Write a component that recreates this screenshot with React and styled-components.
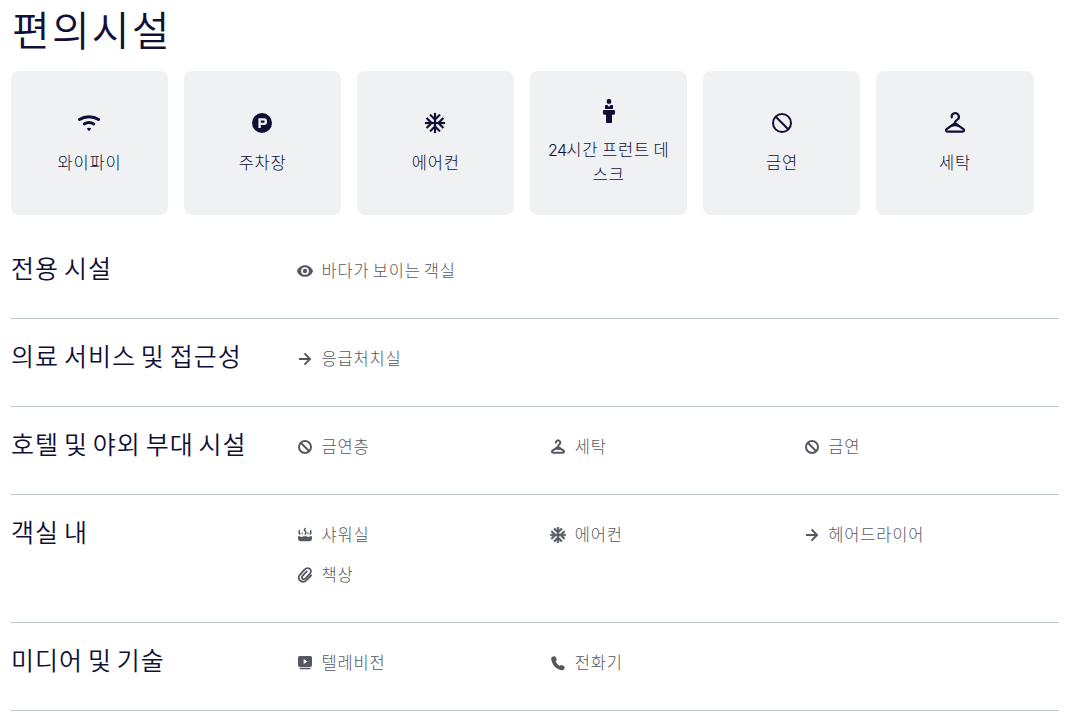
import React from 'react';
import styled, { createGlobalStyle } from 'styled-components';

const ink = '#100f36';
const muted = '#545961';

const GlobalStyle = createGlobalStyle`
  * { box-sizing: border-box; }
  body {
    margin: 0;
    background: #fff;
    color: ${ink};
    font-family: "Noto Sans CJK KR", sans-serif;
    font-weight: 300;
    overflow: hidden;
  }
`;

const Page = styled.main`
  padding: 0 10px 0 11px;
`;

const Title = styled.h1`
  margin: 0;
  height: 71px;
  padding: 0 0 0 1px;
  font-size: 41px;
  font-weight: 350;
  line-height: 56px;
  letter-spacing: 2.2px;
`;

const Highlights = styled.ul`
  display: grid;
  grid-template-columns: repeat(6, 1fr);
  gap: 16px;
  width: 1022.55px;
  margin: 0 0 16px;
  padding: 0;
  list-style: none;
`;

const Card = styled.li`
  display: flex;
  flex-direction: column;
  align-items: center;
  justify-content: center;
  gap: 15px;
  height: 144px;
  padding: 0 16px 1px;
  border-radius: 8px;
  background: #eff1f3;

  svg { margin-right: 0.6px; }
`;

const CardLabel = styled.span`
  margin-top: -0.5px;
  font-size: 16.5px;
  font-weight: 300;
  line-height: 24px;
  letter-spacing: 0.82px;
  word-spacing: -1.8px;
  text-align: center;
`;

const Digits = styled.span`
  font-family: Inter, sans-serif;
  font-size: 16px;
  font-weight: 300;
  letter-spacing: -0.7px;
`;

const Section = styled.section`
  display: grid;
  grid-template-columns: 286px 1fr;
  padding: 27px 0 36px;
  border-bottom: 1px solid #bec5c9;
`;

const SectionTitle = styled.h2`
  height: 32px;
  margin: -7px 0 -1px;
  font-size: 25px;
  font-weight: 350;
  line-height: 32px;
  letter-spacing: 1px;
  word-spacing: -3.1px;
  white-space: nowrap;
`;

const Items = styled.ul`
  display: grid;
  grid-template-columns: repeat(3, 253.4px);
  row-gap: 16px;
  margin: 0;
  padding: 0;
  list-style: none;
`;

const Item = styled.li`
  display: flex;
  align-items: flex-start;
  gap: 8.4px;
  height: 24px;
  color: ${muted};
  font-size: 16.5px;
  line-height: 24px;
  letter-spacing: 0.82px;
  word-spacing: -2.2px;
  white-space: nowrap;

  svg { margin-top: 5px; }
`;

const Glyph = styled.svg`
  display: block;
  flex: none;
  width: ${(p) => p.$size}px;
  height: ${(p) => p.$size}px;
  fill: currentColor;
`;

const stroke = (width) => ({
  fill: 'none',
  stroke: 'currentColor',
  strokeWidth: width,
  strokeLinecap: 'round',
  strokeLinejoin: 'round',
});

const snow =
  'M22 11h-4.17l3.24-3.24-1.41-1.42L15 11h-2V9l4.66-4.66-1.42-1.41L13 6.17V2h-2v4.17L7.76 2.93 6.34 4.34 11 9v2H9L4.34 6.34 2.93 7.76 6.17 11H2v2h4.17l-3.24 3.24 1.41 1.42L9 13h2v2l-4.66 4.66 1.42 1.41L11 17.83V22h2v-4.17l3.24 3.24 1.42-1.41L13 15v-2h2l4.66 4.66 1.41-1.42L17.83 13H22v-2z';

const drawings = {
  wifi: () => (
    <>
      <path {...stroke(3)} d="M2.4 8.4C8 4.7 16 4.7 21.6 8.4" />
      <path {...stroke(2.8)} d="M7.2 13c3-1.9 6.6-1.9 9.6 0" />
      <path d="M9.800 17.500q2.200-1.500 4.400 0L12.700 19.600q-.7.700-1.400 0z" />
    </>
  ),
  parking: () => (
    <path
      fillRule="evenodd"
      d="M12 2a10 10 0 1 0 0 20 10 10 0 0 0 0-20zM8.4 7.2H14a3 3 0 0 1 3 3v.8a3 3 0 0 1-3 3h-3.200v3H8.400zm2.400 2.300v2.200h3.100q.7 0 .7-.7v-.8q0-.7-.7-.7z"
    />
  ),
  snow: () => <path d={snow} stroke="currentColor" strokeWidth="0.2" />,
  snowSmall: () => (
    <path d={snow} transform="translate(-1.8 -1.8) scale(1.15)" stroke="currentColor" strokeWidth="0.9" />
  ),
  desk: () => (
    <>
      <rect x="9.8" y="0" width="4.4" height="4.8" rx="1.5" />
      <path d="M9 6h1.6L12 8l1.4-2H15q1 0 1 1v3H8V7q0-1 1-1z" />
      <path d="M6.8 11h10.4q.8 0 .8.8v2.4q0 1.5-1.5 1.5H15v7.5q0 .8-.8.8H9.8q-.8 0-.8-.8v-7.5H7.5Q6 15.7 6 14.2v-2.4q0-.8.8-.8z" />
    </>
  ),
  ban: () => (
    <g {...stroke(2)}>
      <circle cx="12" cy="12" r="9" />
      <path d="M5.8 5.8 18.2 18.2" />
    </g>
  ),
  banSmall: () => (
    <g {...stroke(3)}>
      <circle cx="12" cy="12" r="9" />
      <path d="M6 6l12 12" />
    </g>
  ),
  hanger: () => (
    <>
      <path
        {...stroke(2.2)}
        d="M8.7 6.3A3.6 3.6 0 1 1 14.3 8.7Q12 10.2 12 12.3L3.5 18.2C2.5 19 3 20.7 4.3 20.7H19.7C21 20.7 21.5 19 20.5 18.2L12 12.3"
      />
      <path d="M12 10.8l7 5.2h-3q-4-1.5-8 0H5z" />
    </>
  ),
  hangerSmall: () => (
    <>
      <path
        {...stroke(3)}
        d="M8.8 5.5A3.3 3.3 0 1 1 14.2 7.9Q12 9.3 12 11.7L3.8 17.4C2.3 18.6 3 20.6 4.7 20.6H19.3C21 20.6 21.7 18.6 20.2 17.4L12 11.7"
      />
      <path d="M12 10.5l7.500 6h-3.500q-4-1-8 0H4.500z" />
    </>
  ),
  eye: () => (
    <>
      <path
        fillRule="evenodd"
        d="M12 3.200C6.200 3.200 1.700 6.800 0 12c1.700 5.200 6.200 8.800 12 8.800s10.300-3.600 12-8.800C22.300 6.800 17.800 3.200 12 3.200zm0 3a5.800 5.800 0 1 1 0 11.600 5.800 5.800 0 0 1 0-11.600z"
      />
      <circle cx="12" cy="12" r="3.3" />
    </>
  ),
  arrow: () => (
    <path {...stroke(3)} strokeLinecap="butt" strokeLinejoin="miter" d="M3 12h16M11.3 3.5l8.200 8.500-8.200 8.500" />
  ),
  tub: () => (
    <>
      <path d="M1.5 14h3q1.200 1 2.500 1t2.500-1h5q1.200 1 2.500 1t2.500-1h3V17a4.500 4.500 0 0 1-4.500 4.500h-12A4.500 4.500 0 0 1 1.500 17z" />
      <path {...stroke(2.3)} d="M3.500 5.500q-1 2.500.8 5M12.200 2.300q-2.400 2 0 4t0 4.300M20.500 5.500q1 2.500-.8 5" />
      <path {...stroke(1.500)} d="M7.800 8.500v2M16.400 8.500v2" />
    </>
  ),
  clip: () => (
    <path
      {...stroke(2.7)}
      d="M21.3 12.5 14.8 19.5C8.5 26 -1.5 19 4.3 11.7L11.2 4C16.5 -1.5 24 4.3 19.5 9.8L13 17C9.3 20.5 5.3 16.5 8.4 13.2L14.6 6.6"
    />
  ),
  tv: () => (
    <>
      <path
        fillRule="evenodd"
        d="M4 1.500h16q2.500 0 2.500 2.500v11.500q0 2.500-2.500 2.500H4q-2.500 0-2.500-2.500V4q0-2.500 2.500-2.500zm6 4.500v7.500l5.500-3.750z"
      />
      <path d="M4 19.200h16v1.300q0 1-1 1H5q-1 0-1-1z" />
    </>
  ),
  phone: () => (
    <path d="M21.200 16.800l-3-1.600q-1.300-.6-2.400.3l-1.300 1a16 16 0 0 1-6-6.800l1.100-1.300q.8-1 .3-2.200L8.600 3Q7.900 1.500 6.300 1.800L3.500 2.500Q1.500 3.100 1.700 5.200C2.600 14.500 9 21.800 18.200 22.700q1.900.2 2.700-1.500l1.100-2.200q.7-1.400-.8-2.200z" />
  ),
};

function Icon({ name, size }) {
  return (
    <Glyph viewBox="0 0 24 24" $size={size} aria-hidden="true">
      {drawings[name]()}
    </Glyph>
  );
}

const highlights = [
  ['wifi', '와이파이'],
  ['parking', '주차장'],
  ['snow', '에어컨'],
  ['desk', '시간 프런트 데스크', '24'],
  ['ban', '금연'],
  ['hanger', '세탁'],
];

const sections = [
  ['전용 시설', [['eye', '바다가 보이는 객실']]],
  ['의료 서비스 및 접근성', [['arrow', '응급처치실']]],
  ['호텔 및 야외 부대 시설', [['banSmall', '금연층'], ['hangerSmall', '세탁'], ['banSmall', '금연']]],
  ['객실 내', [['tub', '샤워실'], ['snowSmall', '에어컨'], ['arrow', '헤어드라이어'], ['clip', '책상']]],
  ['미디어 및 기술', [['tv', '텔레비전'], ['phone', '전화기']]],
];

export default function App() {
  return (
    <>
      <GlobalStyle />
      <Page lang="ko">
        <Title>편의시설</Title>
        <Highlights>
          {highlights.map(([icon, label, digits]) => (
            <Card key={label}>
              <Icon name={icon} size={24} />
              <CardLabel>
                {digits && <Digits>{digits}</Digits>}
                {label}
              </CardLabel>
            </Card>
          ))}
        </Highlights>
        {sections.map(([title, items]) => (
          <Section key={title}>
            <SectionTitle>{title}</SectionTitle>
            <Items>
              {items.map(([icon, label]) => (
                <Item key={label}>
                  <Icon name={icon} size={16} />
                  <span>{label}</span>
                </Item>
              ))}
            </Items>
          </Section>
        ))}
      </Page>
    </>
  );
}
